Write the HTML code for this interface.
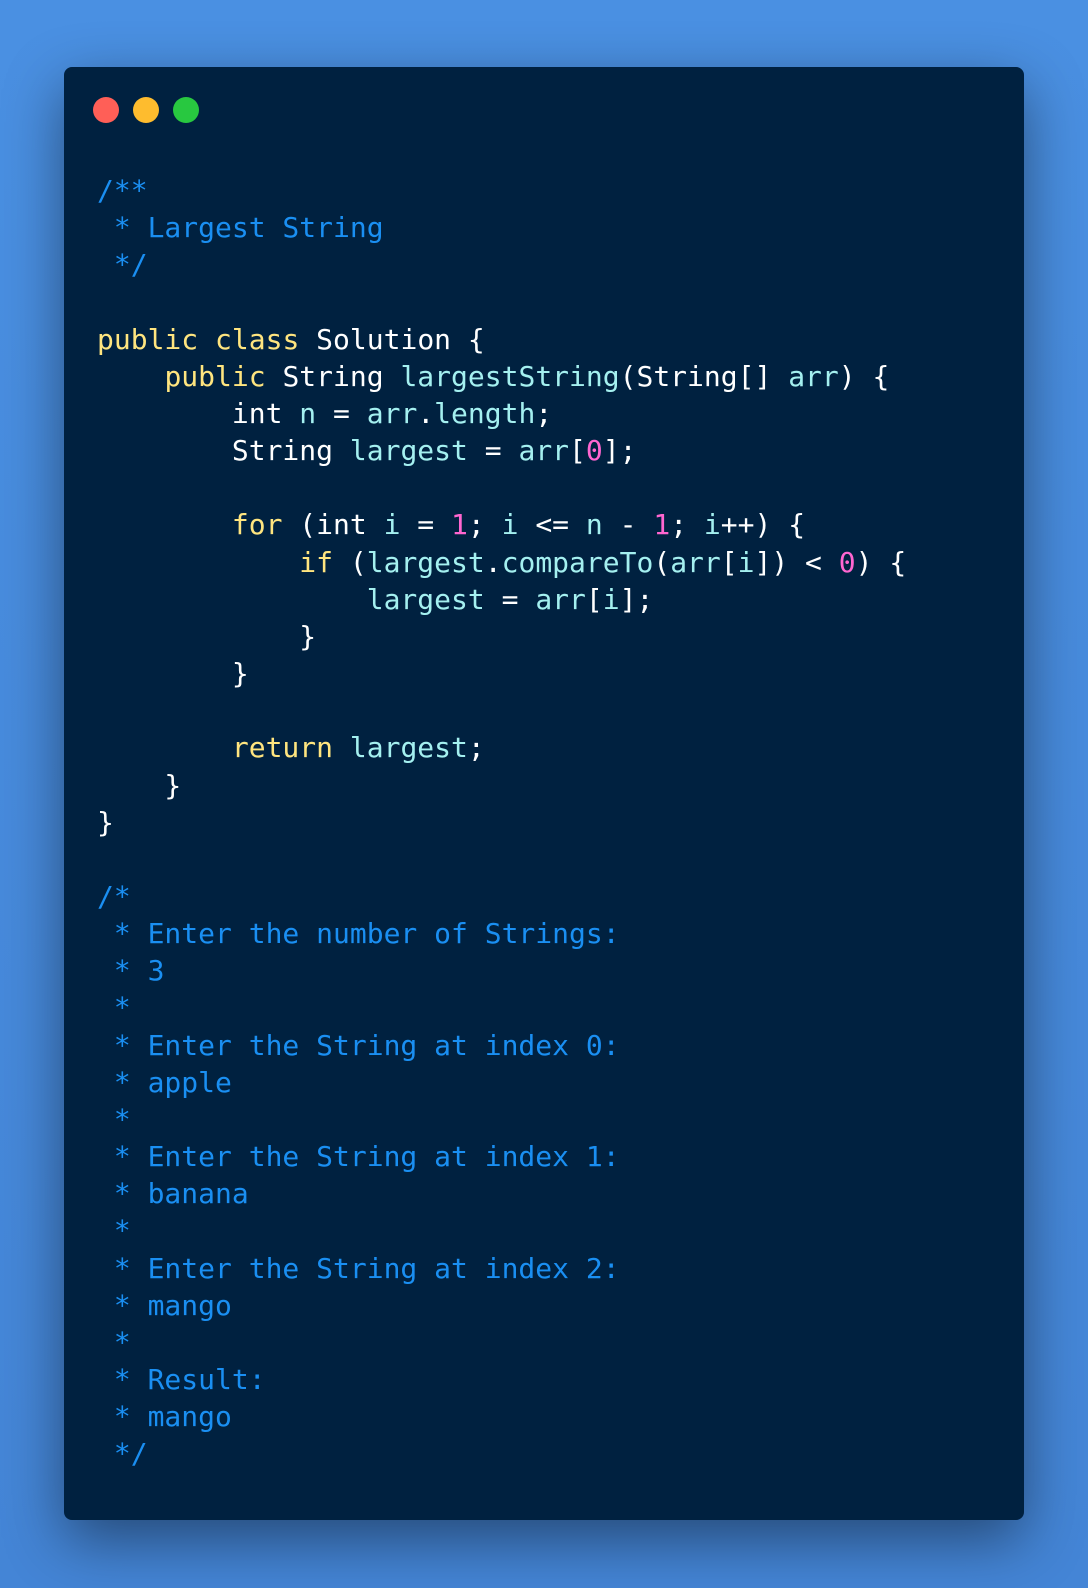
<!DOCTYPE html>
<html><head><style>
html,body{margin:0;padding:0}
body{width:1088px;height:1588px;background:linear-gradient(180deg,#4a90e2,#4485d6);position:relative;overflow:hidden;font-family:"DejaVu Sans Mono","Liberation Mono",monospace}
.win{position:absolute;left:64px;top:67px;width:960px;height:1453px;background:#002140;border-radius:8px;box-shadow:0 20px 60px rgba(0,0,0,0.45)}
.dot{position:absolute;top:97px;width:26px;height:26px;border-radius:50%}
pre{position:absolute;left:97px;top:172px;margin:0;font-family:"DejaVu Sans Mono",monospace;font-size:28px;line-height:37.15px;color:#fff}
.c{color:#1a8ff2}.k{color:#ffe57f}.i{color:#a4f0f0}.n{color:#ff66d0}
</style></head><body>
<div class="win"></div>
<div class="dot" style="left:93px;background:#ff5f57"></div>
<div class="dot" style="left:133px;background:#febc2e"></div>
<div class="dot" style="left:173px;background:#28c840"></div>
<pre><span class="c">/**
 * Largest String
 */</span>

<span class="k">public</span> <span class="k">class</span> Solution {
    <span class="k">public</span> String <span class="i">largestString</span>(String[] <span class="i">arr</span>) {
        int <span class="i">n</span> = <span class="i">arr</span>.<span class="i">length</span>;
        String <span class="i">largest</span> = <span class="i">arr</span>[<span class="n">0</span>];

        <span class="k">for</span> (int <span class="i">i</span> = <span class="n">1</span>; <span class="i">i</span> &lt;= <span class="i">n</span> - <span class="n">1</span>; <span class="i">i</span>++) {
            <span class="k">if</span> (<span class="i">largest</span>.<span class="i">compareTo</span>(<span class="i">arr</span>[<span class="i">i</span>]) &lt; <span class="n">0</span>) {
                <span class="i">largest</span> = <span class="i">arr</span>[<span class="i">i</span>];
            }
        }

        <span class="k">return</span> <span class="i">largest</span>;
    }
}

<span class="c">/*
 * Enter the number of Strings:
 * 3
 *
 * Enter the String at index 0:
 * apple
 *
 * Enter the String at index 1:
 * banana
 *
 * Enter the String at index 2:
 * mango
 *
 * Result:
 * mango
 */</span></pre>
</body></html>
